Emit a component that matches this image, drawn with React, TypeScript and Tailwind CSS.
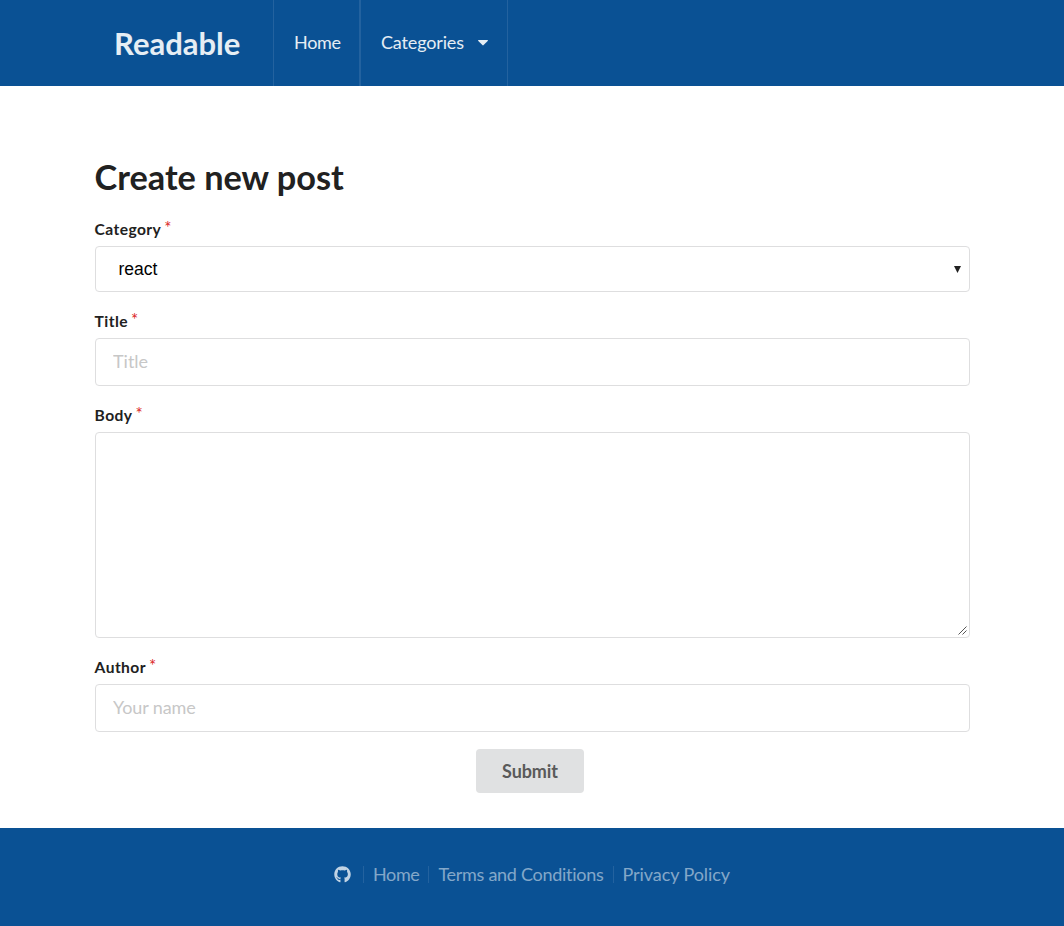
import type { ReactNode } from 'react';
import { FaGithub } from 'react-icons/fa';

const control =
  'block w-full rounded-[4px] border border-[#dededf] bg-white outline-none';

function Field({ label, children }: { label: string; children: ReactNode }) {
  return (
    <div className="mb-[18px]">
      <label className="-ml-[0.4px] mb-[5px] flex h-[23px] items-center text-[15.6px] leading-[23px] font-bold text-[#212121]">
        <span className="tracking-[0.42px]">{label}</span>
        <span className="ml-[3px] -mt-[4px] text-[17px] font-normal text-[#db2828]">*</span>
      </label>
      {children}
    </div>
  );
}

function Header() {
  return (
    <header className="h-[86px] bg-[#0a5194] text-[18px] text-white/90">
      <nav className="ml-[94px] flex h-[86px] items-stretch">
        <a className="flex w-[180px] items-center border-r border-white/10 pl-5 text-[31px] leading-none font-bold">
          Readable
        </a>
        <a className="flex w-[86px] items-center border-r border-white/10 pb-px pl-5 tracking-[-0.3px]">Home</a>
        <a className="flex w-[148px] items-center border-x border-white/10 pb-px pl-5">
          <span className="tracking-[-0.15px]">Categories</span>
          <svg className="ml-[14px]" width="10" height="6" viewBox="0 0 10 6" fill="currentColor">
            <path d="M.5 0h9q.8.2.2.9L5.6 5.1q-.6.6-1.2 0L.3.9Q-.2.2.5 0Z" />
          </svg>
        </a>
      </nav>
    </header>
  );
}

function Divider() {
  return <span className="h-[17px] w-px bg-white/10" />;
}

function Footer() {
  return (
    <footer className="flex h-[98px] items-start justify-center bg-[#0a5194] pt-[33px] text-[18px] leading-[26px] text-white/50">
      <div className="flex h-[26px] items-center">
        <FaGithub className="mr-[12px] size-[17px] text-white/75" />
        <Divider />
        <a className="mx-[9px] tracking-[-0.4px]">Home</a>
        <Divider />
        <a className="mx-[9px] tracking-[-0.28px]">Terms and Conditions</a>
        <Divider />
        <a className="ml-[9px] tracking-[-0.08px]">Privacy Policy</a>
      </div>
    </footer>
  );
}

export default function App() {
  return (
    <div className="flex h-[926px] flex-col bg-white font-['Lato',sans-serif] [font-variant-ligatures:none]">
      <Header />
      <main className="flex h-[742px] flex-col px-[94px] pt-[68px]">
        <h1 className="mb-[18px] ml-[0.5px] h-[46px] text-[34.3px] leading-[46px] font-bold text-[#212121]">
          Create new post
        </h1>
        <form className="ml-px flex w-[875px] flex-col" onSubmit={(e) => e.preventDefault()}>
          <Field label="Category">
            <div className="grid items-center">
              <select
                className={`${control} col-start-1 row-start-1 h-[46px] appearance-none px-[22.5px] font-['Liberation_Sans',sans-serif] text-[17.5px] text-black`}
              >
                <option>react</option>
              </select>
              <svg
                className="pointer-events-none col-start-1 row-start-1 mr-[9px] justify-self-end"
                width="7"
                height="7"
                viewBox="0 0 7 7"
              >
                <path d="M0 0h7L3.5 7Z" fill="#212121" />
              </svg>
            </div>
          </Field>
          <Field label="Title">
            <input
              className={`${control} h-[48px] px-[17px] pb-[2px] text-[18px] placeholder:text-[#c7c7c7]`}
              placeholder="Title"
            />
          </Field>
          <Field label="Body">
            <div className="grid">
              <textarea
                className={`${control} col-start-1 row-start-1 h-[206px] resize-none px-[17px] py-[13px] text-[18px]`}
              />
              <svg
                className="pointer-events-none col-start-1 row-start-1 mr-[3px] mb-[3px] self-end justify-self-end"
                width="9"
                height="9"
                viewBox="0 0 9 9"
                stroke="#555"
                strokeWidth="1"
              >
                <path d="M.5 8.5l8-8M4.5 8.5l4-4" />
              </svg>
            </div>
          </Field>
          <Field label="Author">
            <input
              className={`${control} h-[48px] px-[17px] pb-[2px] text-[18px] tracking-[-0.1px] placeholder:text-[#c7c7c7]`}
              placeholder="Your name"
            />
          </Field>
          <button className="-mt-px mr-[5px] h-[44px] w-[108px] self-center rounded-[4px] bg-[#e0e1e2] text-[18px] font-bold tracking-[-0.1px] text-[#5a5a5a]">
            Submit
          </button>
        </form>
      </main>
      <Footer />
    </div>
  );
}
